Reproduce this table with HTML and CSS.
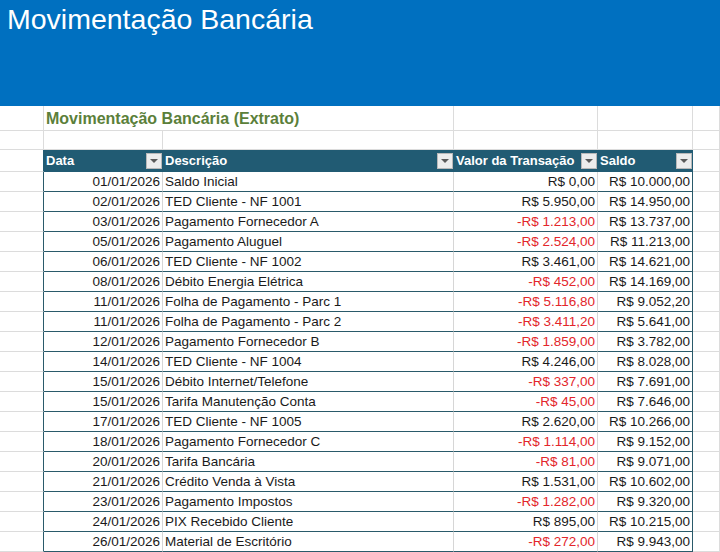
FILE: index.html
```html
<!DOCTYPE html>
<html lang="pt-BR">
<head>
<meta charset="utf-8">
<title>Movimentação Bancária</title>
<link rel="stylesheet" href="styles.css">
</head>
<body>
<div class="banner"><h1 class="banner-title">Movimentação Bancária</h1></div>
<div class="sheet">
  <div class="row title-row">
    <div class="c"></div>
    <div class="c title">Movimentação Bancária (Extrato)</div>
    <div class="c"></div>
    <div class="c"></div>
    <div class="c"></div>
  </div>
  <div class="row blank-row">
    <div class="c"></div><div class="c"></div><div class="c"></div><div class="c"></div><div class="c"></div><div class="c"></div>
  </div>
  <div class="row head-row">
    <div class="c lead"></div>
    <div class="c th"><span>Data</span><span class="fbtn"></span></div>
    <div class="c th"><span>Descrição</span><span class="fbtn"></span></div>
    <div class="c th"><span>Valor da Transação</span><span class="fbtn"></span></div>
    <div class="c th"><span>Saldo</span><span class="fbtn"></span></div>
    <div class="c"></div>
  </div>
  <div class="row data-row"><div class="c lead"></div><div class="c td num">01/01/2026</div><div class="c td">Saldo Inicial</div><div class="c td num">R$ 0,00</div><div class="c td num last">R$ 10.000,00</div><div class="c"></div></div>
  <div class="row data-row"><div class="c lead"></div><div class="c td num">02/01/2026</div><div class="c td">TED Cliente - NF 1001</div><div class="c td num">R$ 5.950,00</div><div class="c td num last">R$ 14.950,00</div><div class="c"></div></div>
  <div class="row data-row"><div class="c lead"></div><div class="c td num">03/01/2026</div><div class="c td">Pagamento Fornecedor A</div><div class="c td num neg">-R$ 1.213,00</div><div class="c td num last">R$ 13.737,00</div><div class="c"></div></div>
  <div class="row data-row"><div class="c lead"></div><div class="c td num">05/01/2026</div><div class="c td">Pagamento Aluguel</div><div class="c td num neg">-R$ 2.524,00</div><div class="c td num last">R$ 11.213,00</div><div class="c"></div></div>
  <div class="row data-row"><div class="c lead"></div><div class="c td num">06/01/2026</div><div class="c td">TED Cliente - NF 1002</div><div class="c td num">R$ 3.461,00</div><div class="c td num last">R$ 14.621,00</div><div class="c"></div></div>
  <div class="row data-row"><div class="c lead"></div><div class="c td num">08/01/2026</div><div class="c td">Débito Energia Elétrica</div><div class="c td num neg">-R$ 452,00</div><div class="c td num last">R$ 14.169,00</div><div class="c"></div></div>
  <div class="row data-row"><div class="c lead"></div><div class="c td num">11/01/2026</div><div class="c td">Folha de Pagamento - Parc 1</div><div class="c td num neg">-R$ 5.116,80</div><div class="c td num last">R$ 9.052,20</div><div class="c"></div></div>
  <div class="row data-row"><div class="c lead"></div><div class="c td num">11/01/2026</div><div class="c td">Folha de Pagamento - Parc 2</div><div class="c td num neg">-R$ 3.411,20</div><div class="c td num last">R$ 5.641,00</div><div class="c"></div></div>
  <div class="row data-row"><div class="c lead"></div><div class="c td num">12/01/2026</div><div class="c td">Pagamento Fornecedor B</div><div class="c td num neg">-R$ 1.859,00</div><div class="c td num last">R$ 3.782,00</div><div class="c"></div></div>
  <div class="row data-row"><div class="c lead"></div><div class="c td num">14/01/2026</div><div class="c td">TED Cliente - NF 1004</div><div class="c td num">R$ 4.246,00</div><div class="c td num last">R$ 8.028,00</div><div class="c"></div></div>
  <div class="row data-row"><div class="c lead"></div><div class="c td num">15/01/2026</div><div class="c td">Débito Internet/Telefone</div><div class="c td num neg">-R$ 337,00</div><div class="c td num last">R$ 7.691,00</div><div class="c"></div></div>
  <div class="row data-row"><div class="c lead"></div><div class="c td num">15/01/2026</div><div class="c td">Tarifa Manutenção Conta</div><div class="c td num neg">-R$ 45,00</div><div class="c td num last">R$ 7.646,00</div><div class="c"></div></div>
  <div class="row data-row"><div class="c lead"></div><div class="c td num">17/01/2026</div><div class="c td">TED Cliente - NF 1005</div><div class="c td num">R$ 2.620,00</div><div class="c td num last">R$ 10.266,00</div><div class="c"></div></div>
  <div class="row data-row"><div class="c lead"></div><div class="c td num">18/01/2026</div><div class="c td">Pagamento Fornecedor C</div><div class="c td num neg">-R$ 1.114,00</div><div class="c td num last">R$ 9.152,00</div><div class="c"></div></div>
  <div class="row data-row"><div class="c lead"></div><div class="c td num">20/01/2026</div><div class="c td">Tarifa Bancária</div><div class="c td num neg">-R$ 81,00</div><div class="c td num last">R$ 9.071,00</div><div class="c"></div></div>
  <div class="row data-row"><div class="c lead"></div><div class="c td num">21/01/2026</div><div class="c td">Crédito Venda à Vista</div><div class="c td num">R$ 1.531,00</div><div class="c td num last">R$ 10.602,00</div><div class="c"></div></div>
  <div class="row data-row"><div class="c lead"></div><div class="c td num">23/01/2026</div><div class="c td">Pagamento Impostos</div><div class="c td num neg">-R$ 1.282,00</div><div class="c td num last">R$ 9.320,00</div><div class="c"></div></div>
  <div class="row data-row"><div class="c lead"></div><div class="c td num">24/01/2026</div><div class="c td">PIX Recebido Cliente</div><div class="c td num">R$ 895,00</div><div class="c td num last">R$ 10.215,00</div><div class="c"></div></div>
  <div class="row data-row"><div class="c lead"></div><div class="c td num">26/01/2026</div><div class="c td">Material de Escritório</div><div class="c td num neg">-R$ 272,00</div><div class="c td num last">R$ 9.943,00</div><div class="c"></div></div>
</div>
</body>
</html>
```
FILE: styles.css
```css
html, body {
  margin: 0;
  padding: 0;
  background: #ffffff;
  overflow: hidden;
}
body {
  font-family: "Liberation Sans", Arial, sans-serif;
  color: #1a1a1a;
  width: 720px;
  height: 552px;
}
.banner {
  height: 106px;
  background: #0070c0;
  box-sizing: border-box;
  padding: 5px 7px 0;
}
.banner-title {
  margin: 0;
  font-weight: normal;
  font-size: 28.5px;
  line-height: 28px;
  color: #ffffff;
}
.sheet {
  display: flex;
  flex-direction: column;
}
.row {
  display: grid;
  grid-template-columns: 44px 119px 291px 144px 95px 27px;
}
.c {
  box-sizing: border-box;
  border-right: 1px solid #dcdcdc;
  border-bottom: 1px solid #dcdcdc;
  white-space: nowrap;
  overflow: hidden;
}
.title-row {
  height: 25px;
}
.title-row .title {
  grid-column: span 2;
  font-weight: bold;
  font-size: 16px;
  line-height: 24px;
  padding: 1px 0 0 2px;
  color: #5b7f3a;
  border-bottom-color: #dcdcdc;
}
.blank-row {
  height: 19px;
}
.head-row {
  height: 22px;
}
.head-row .lead {
  border-right-color: #215b73;
}
.th {
  background: #215b73;
  border-right-color: #215b73;
  border-bottom-color: #215b73;
  color: #ffffff;
  font-weight: bold;
  font-size: 13px;
  display: flex;
  align-items: center;
  justify-content: space-between;
  padding: 0 0 0 2px;
}
.fbtn {
  width: 16px;
  height: 16px;
  box-sizing: border-box;
  background: #ececec;
  border: 1px solid #b8b8b8;
  display: flex;
  align-items: center;
  justify-content: center;
  flex: none;
}
.fbtn::after {
  content: "";
  width: 0;
  height: 0;
  border-left: 4px solid transparent;
  border-right: 4px solid transparent;
  border-top: 4px solid #5a5a5a;
  margin-top: 1px;
}
.data-row {
  height: 20px;
}
.data-row .lead {
  border-right-color: #2a5a6a;
}
.td {
  font-size: 13.5px;
  line-height: 19px;
  padding: 0 2px 0 2px;
  border-bottom-color: #2a5a6a;
  border-right-color: #d6d6d6;
}
.td.last {
  border-right-color: #2a5a6a;
}
.num {
  text-align: right;
}
.neg {
  color: #e3262b;
}
```
